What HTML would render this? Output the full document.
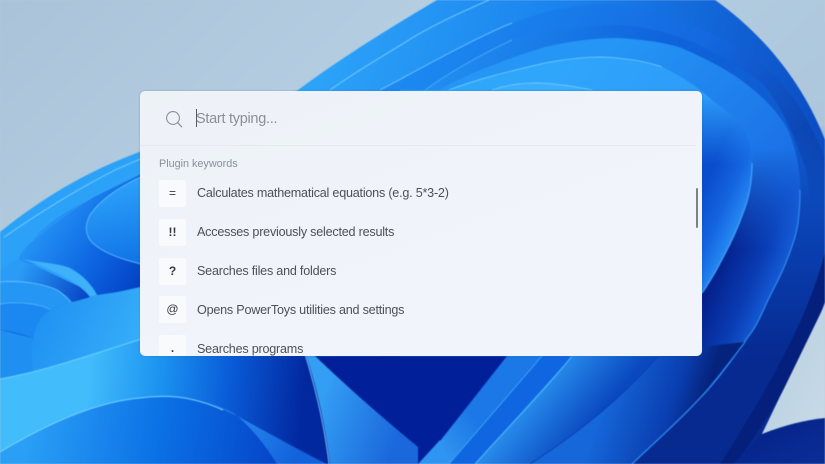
<!DOCTYPE html>
<html><head><meta charset="utf-8">
<style>
html,body{margin:0;padding:0;width:825px;height:464px;overflow:hidden;background:#b3cce0}
#bg{position:absolute;left:0;top:0;width:825px;height:464px;filter:blur(.5px)}
#panel{position:absolute;left:140px;top:91px;width:562px;height:265px;border-radius:5px;background:linear-gradient(160deg,#edf2f7,#f1f4fb 60%);overflow:hidden;box-shadow:0 0 2px rgba(60,80,110,.3);font-family:"Liberation Sans",sans-serif}
#sep{position:absolute;left:0;top:54px;width:556px;height:1px;background:#e6eaef}
#cur{position:absolute;left:56px;top:18px;width:1px;height:18px;background:#555b62}
.t{position:absolute;white-space:nowrap}
#ph{left:56px;top:19px;font-size:14.5px;line-height:18px;color:#8b9095;letter-spacing:-.28px}
#hd{left:19px;top:66px;font-size:10.8px;line-height:14px;color:#8a9096}
.k{position:absolute;left:19px;width:27px;height:27px;background:#f9fafc;border-radius:2px;text-align:center;font-size:12px;line-height:27px;color:#33383e}
.d{left:57px;font-size:12.6px;line-height:18px;color:#4c5157;letter-spacing:-.22px}
#sb{position:absolute;left:555.5px;top:97px;width:2px;height:40px;border-radius:1px;background:#7d8085}
</style></head><body>
<svg id="bg" viewBox="0 0 825 464" width="825" height="464" xmlns="http://www.w3.org/2000/svg">
<defs>
<linearGradient id="sky" x1="0" y1="0" x2="1" y2="0.6"><stop offset="0" stop-color="#aac3d8"/><stop offset=".45" stop-color="#b6cfe3"/><stop offset="1" stop-color="#a9c3d9"/></linearGradient>
<linearGradient id="skyb" x1="0" y1="0" x2="1" y2="1"><stop offset="0" stop-color="#b6cfe2"/><stop offset="1" stop-color="#c8dae6"/></linearGradient>
<linearGradient id="s0" gradientUnits="userSpaceOnUse" x1="300" y1="60" x2="825" y2="200"><stop offset="0" stop-color="#2ea6f9"/><stop offset=".45" stop-color="#1a82ee"/><stop offset="1" stop-color="#0a48c0"/></linearGradient>
<linearGradient id="s1" gradientUnits="userSpaceOnUse" x1="420" y1="40" x2="825" y2="300"><stop offset="0" stop-color="#1c8af2"/><stop offset=".5" stop-color="#1468e0"/><stop offset="1" stop-color="#062a90"/></linearGradient>
<linearGradient id="s2" gradientUnits="userSpaceOnUse" x1="430" y1="60" x2="810" y2="220"><stop offset="0" stop-color="#2290f2"/><stop offset=".5" stop-color="#0f64dc"/><stop offset="1" stop-color="#0f58cc"/></linearGradient>
<linearGradient id="s3" gradientUnits="userSpaceOnUse" x1="620" y1="40" x2="780" y2="200"><stop offset="0" stop-color="#2596f6"/><stop offset="1" stop-color="#1a6ce4"/></linearGradient>
<linearGradient id="s3b" gradientUnits="userSpaceOnUse" x1="715" y1="270" x2="785" y2="300"><stop offset="0" stop-color="#04208a"/><stop offset=".5" stop-color="#0a3cb4"/><stop offset="1" stop-color="#1a6ee8"/></linearGradient>
<linearGradient id="fade3" gradientUnits="userSpaceOnUse" x1="0" y1="150" x2="0" y2="250"><stop offset="0" stop-color="#000"/><stop offset="1" stop-color="#fff"/></linearGradient>
<mask id="m3" maskUnits="userSpaceOnUse" x="0" y="0" width="825" height="464"><rect width="825" height="464" fill="url(#fade3)"/></mask>
<linearGradient id="s4" gradientUnits="userSpaceOnUse" x1="560" y1="60" x2="750" y2="180"><stop offset="0" stop-color="#30a6fb"/><stop offset="1" stop-color="#2a96f8"/></linearGradient>
<linearGradient id="s4b" gradientUnits="userSpaceOnUse" x1="702" y1="190" x2="750" y2="212"><stop offset="0" stop-color="#0a4ccc"/><stop offset=".5" stop-color="#1464e0"/><stop offset="1" stop-color="#2a92f6"/></linearGradient>
<linearGradient id="fade4" gradientUnits="userSpaceOnUse" x1="0" y1="95" x2="0" y2="165"><stop offset="0" stop-color="#000"/><stop offset="1" stop-color="#fff"/></linearGradient>
<mask id="m4" maskUnits="userSpaceOnUse" x="0" y="0" width="825" height="464"><rect width="825" height="464" fill="url(#fade4)"/></mask>
<linearGradient id="fade5" gradientUnits="userSpaceOnUse" x1="0" y1="125" x2="0" y2="200"><stop offset="0" stop-color="#000"/><stop offset="1" stop-color="#fff"/></linearGradient>
<mask id="m5" maskUnits="userSpaceOnUse" x="0" y="0" width="825" height="464"><rect width="825" height="464" fill="url(#fade5)"/></mask>
<linearGradient id="out" gradientUnits="userSpaceOnUse" x1="0" y1="130" x2="0" y2="360"><stop offset="0" stop-color="#1258cc"/><stop offset=".5" stop-color="#0a3fb0"/><stop offset="1" stop-color="#062a90"/></linearGradient>
<linearGradient id="b1" gradientUnits="userSpaceOnUse" x1="420" y1="460" x2="475" y2="420"><stop offset="0" stop-color="#3ca2f6"/><stop offset="1" stop-color="#1b78e6"/></linearGradient>
<linearGradient id="b3" gradientUnits="userSpaceOnUse" x1="510" y1="400" x2="570" y2="450"><stop offset="0" stop-color="#2f9cf6"/><stop offset="1" stop-color="#0a48c0"/></linearGradient>
<linearGradient id="b4" gradientUnits="userSpaceOnUse" x1="600" y1="410" x2="690" y2="440"><stop offset="0" stop-color="#1668da"/><stop offset=".7" stop-color="#0a3eb0"/><stop offset="1" stop-color="#05237c"/></linearGradient>
<linearGradient id="br" x1="0" y1="0" x2="1" y2="1"><stop offset="0" stop-color="#041f88"/><stop offset="1" stop-color="#0a2f96"/></linearGradient>
<linearGradient id="leaf" gradientUnits="userSpaceOnUse" x1="40" y1="225" x2="135" y2="290"><stop offset="0" stop-color="#2592f4"/><stop offset=".5" stop-color="#0f6ae4"/><stop offset="1" stop-color="#0442c6"/></linearGradient>
<linearGradient id="lobe" gradientUnits="userSpaceOnUse" x1="110" y1="190" x2="130" y2="270"><stop offset="0" stop-color="#2a9ef8"/><stop offset="1" stop-color="#0f70e6"/></linearGradient>
<linearGradient id="und" gradientUnits="userSpaceOnUse" x1="20" y1="270" x2="90" y2="300"><stop offset="0" stop-color="#2a9cf6"/><stop offset="1" stop-color="#0540c4"/></linearGradient>
<linearGradient id="cy" gradientUnits="userSpaceOnUse" x1="40" y1="300" x2="145" y2="345"><stop offset="0" stop-color="#1f90f2"/><stop offset="1" stop-color="#38b0fa"/></linearGradient>
<linearGradient id="mid" gradientUnits="userSpaceOnUse" x1="90" y1="360" x2="305" y2="380"><stop offset="0" stop-color="#42bcfb"/><stop offset=".35" stop-color="#1a90f0"/><stop offset=".65" stop-color="#0a5cd8"/><stop offset="1" stop-color="#0228a0"/></linearGradient>
<linearGradient id="low" gradientUnits="userSpaceOnUse" x1="30" y1="420" x2="280" y2="460"><stop offset="0" stop-color="#2a9ff6"/><stop offset=".5" stop-color="#0c72e6"/><stop offset="1" stop-color="#0544c8"/></linearGradient>
<linearGradient id="wed" gradientUnits="userSpaceOnUse" x1="230" y1="415" x2="300" y2="450"><stop offset="0" stop-color="#2a8cf0"/><stop offset="1" stop-color="#1262dc"/></linearGradient>
<linearGradient id="band" gradientUnits="userSpaceOnUse" x1="320" y1="400" x2="400" y2="430"><stop offset="0" stop-color="#349ef4"/><stop offset="1" stop-color="#1b68dc"/></linearGradient>
</defs>
<rect width="825" height="464" fill="url(#sky)"/>

<!-- main silhouette top/right -->
<path d="M0,232 C50,192 95,168 145,150 L298,90 C345,55 395,25 437,0 L715,0 C755,28 800,75 825,140 L860,200 L825,302 L762,434 L735,464 L0,464 Z" fill="url(#s0)"/>
<path d="M330,90 C355,72 385,55 412,38 C435,24 462,12 489,0" fill="none" stroke="#7fd0fc" stroke-width=".9"/>

<!-- nested right layers -->
<path d="M380,90 C400,80 470,40 512,23 C540,12 575,4 605,4 C640,6 660,12 678,20 C705,30 730,42 745,50 C765,65 780,80 795,100 C815,130 825,160 840,190 L830,252 C815,300 800,335 779,365 C760,400 740,430 720,464 L380,464 Z" fill="url(#s1)"/>
<path d="M380,90 C400,80 470,40 512,23" fill="none" stroke="#7accfc" stroke-width=".8"/>
<path d="M425,90 C450,72 480,55 512,40 C550,30 590,25 619,25 C650,27 675,35 695,43 C720,55 745,70 762,83 C785,110 795,140 805,167 C812,195 810,225 800,255 L400,464 L400,90 Z" fill="url(#s2)"/>
<path d="M425,90 C450,72 480,55 512,40" fill="none" stroke="#5ab6fa" stroke-width=".7"/>
<!-- beyond D -->
<path d="M788,130 C796,150 801,170 800,190 C800,212 798,230 793,243 C787,262 781,275 773,290 C765,305 760,320 753,330 C735,355 718,380 699,399 C680,420 655,442 632,464 L735,464 L762,434 L825,302 L840,200 L830,120 Z" fill="url(#out)" mask="url(#m5)"/>
<!-- D region -->
<path d="M439,90 C470,72 510,58 545,47 C575,40 600,38 619,38 C645,40 662,42 679,47 C705,58 728,70 745,83 C765,98 780,115 788,130 C796,150 801,170 800,190 C800,212 798,230 793,243 C787,262 781,275 773,290 C765,305 760,320 753,330 C735,355 718,380 699,399 C680,420 655,442 632,464 L400,464 L400,90 Z" fill="url(#s3)"/>
<path d="M700,140 L800,140 L800,190 C800,212 798,230 793,243 C787,262 781,275 773,290 C765,305 760,320 753,330 C735,355 718,380 699,399 C680,420 655,442 632,464 L560,464 L658,356 L700,300 Z" fill="url(#s3b)" mask="url(#m3)"/>
<!-- E region -->
<path d="M449,90 C480,78 515,70 545,63 C565,59 585,57 602,57 C625,58 645,61 662,67 C680,75 698,87 712,100 C725,110 738,120 745,130 C750,142 753,152 752,163 C752,180 749,198 743,213 C737,230 730,245 720,263 C715,273 708,284 702,293 L658,356 L530,464 L400,464 L400,90 Z" fill="url(#s4)"/>
<path d="M690,95 L712,100 C725,110 738,120 745,130 C750,142 753,152 752,163 C752,180 749,198 743,213 C737,230 730,245 720,263 C715,273 708,284 702,293 L690,310 Z" fill="url(#s4b)" mask="url(#m4)"/>
<path d="M449,90 C480,78 515,70 545,63 C565,59 585,57 602,57 C625,58 645,61 662,67" fill="none" stroke="#72ccfd" stroke-width=".8"/>
<path d="M492,90 C510,84 525,83 539,83 C560,84 578,87 592,90 Z" fill="#3aaefc"/>
<path d="M492,90 C510,84 525,83 539,83 C560,84 578,87 592,90" fill="none" stroke="#7ad0fd" stroke-width=".7"/>
<path d="M752,163 C752,180 749,198 743,213 C737,230 730,245 720,263 C715,273 708,284 702,293" fill="none" stroke="#3a9cf8" stroke-width="1.4"/>
<path d="M632,464 C655,442 680,420 699,399 C718,380 735,355 753,330 C760,320 765,305 773,290 C781,275 787,262 793,243 C798,230 800,212 800,190" fill="none" stroke="#2f8cf0" stroke-width="1.2"/>
<path d="M825,252 C810,310 780,370 720,464 L735,464 C775,410 808,350 825,302 Z" fill="#05207c"/>
<!-- outer edge & sky lower right -->
<path d="M826,302 L762,434 L826,419 Z" fill="url(#skyb)"/>
<path d="M762,434 C785,425 805,420 825,418 L825,464 L733,464 Z" fill="url(#br)"/>

<!-- bottom center strips -->
<path d="M300,356 L512,356 L422,464 L300,464 Z" fill="#021f9a"/>
<path d="M507,356 L542,356 L449,464 L422,464 Z" fill="url(#b1)"/>
<path d="M542,356 L572,356 L475,464 L449,464 Z" fill="#0f66e0"/>
<path d="M572,356 L658,356 C625,395 580,432 530,464 L475,464 Z" fill="url(#b3)"/>
<path d="M655,352 L745,342 L699,399 L632,464 L530,464 C580,432 625,395 658,356 Z" fill="url(#b4)"/>
<path d="M449,464 L542,356" stroke="#3ea6fa" stroke-width=".9" fill="none"/>
<path d="M475,464 C510,425 545,390 572,356" stroke="#52bafc" stroke-width="1" fill="none"/>
<path d="M530,464 C580,432 625,395 658,356" stroke="#0a3cb0" stroke-width=".8" fill="none"/>
<path d="M632,464 C655,442 680,420 699,399 C718,380 735,355 745,342" fill="none" stroke="#2f8cf0" stroke-width="1.2"/>
<path d="M418,464 L440,440 L449,464 Z" fill="#2f94f2"/>

<!-- left top region -->
<path d="M0,232 C50,192 95,168 145,150 L145,300 L0,300 Z" fill="#2ba2f8"/>
<path d="M0,240 C40,212 80,188 115,170 L145,157" fill="none" stroke="#7dd0fc" stroke-width=".9"/>
<!-- under-leaf -->
<path d="M0,280 L0,258 L19,258 L97,295 L70,303 L0,290 Z" fill="url(#und)"/>
<path d="M0,232 L19,258 L0,270 Z" fill="#2ba2f8"/>
<path d="M19,258 C20,254 25,248 40,232 C70,205 110,190 145,172 L145,288 L97,295 C92,284 85,280 80,278 C70,272 55,267 40,265 C30,264 20,262 19,258 Z" fill="url(#leaf)"/>
<path d="M19,258 C30,262 55,262 70,268 C85,276 92,286 97,295 L90,297 C80,284 60,272 19,258 Z" fill="#3fb0fa"/>
<path d="M145,175 C120,186 100,200 90,215 C85,225 85,232 90,240 C100,252 120,259 145,265 Z" fill="url(#lobe)"/>
<path d="M145,175 C120,186 100,200 90,215 C85,225 85,232 90,240 C100,252 120,259 145,265" fill="none" stroke="#66c2fc" stroke-width=".8"/>
<path d="M30,243 C60,215 100,192 145,168" fill="none" stroke="#3aa4f8" stroke-width=".7"/>

<!-- left small lobes -->
<path d="M0,282 L0,379 L33,372 L32,345 L47,315 L72,302 L57,290 C45,284 20,280 0,282 Z" fill="#0f6ee6"/>
<path d="M0,282 C20,280 45,284 57,290 C63,294 68,298 71,302 L53,310 C40,304 20,302 0,304 Z" fill="#2596f4"/>
<path d="M0,304 C20,301 42,304 53,311 L46,316 C38,322 34,330 32,338 C22,333 10,331 0,330 Z" fill="#1a88f0"/>
<path d="M0,282 C20,280 45,284 57,290 C63,294 68,298 71,302" fill="none" stroke="#6cc6fc" stroke-width=".8"/>
<path d="M0,304 C20,301 42,304 53,311" fill="none" stroke="#5cbcfb" stroke-width=".7"/>
<path d="M0,330 L32,338 L32,350 L33,372 L0,379 Z" fill="#1f90f2"/>

<!-- big cyan blob -->
<path d="M33,372 C30,355 30,335 40,320 C47,310 57,306 67,303 L145,286 L145,338 C100,350 70,362 33,372 Z" fill="url(#cy)"/>
<path d="M33,372 C30,355 30,335 40,320 C47,310 57,306 67,303" fill="none" stroke="#2090f0" stroke-width=".6"/>
<path d="M0,379 C50,370 95,353 145,338 L145,352 L305,352 C318,390 325,430 330,464 L0,464 Z" fill="url(#mid)"/>
<path d="M0,379 C50,370 95,353 145,338" fill="none" stroke="#6cd0fc" stroke-width="1"/>
<path d="M0,452 C45,425 95,402 140,398 C155,396 165,396 177,397 C195,399 210,404 223,410 C240,418 258,429 273,440 C290,447 310,456 327,464 L0,464 Z" fill="url(#low)"/>
<path d="M0,452 C45,425 95,402 140,398 C155,396 165,396 177,397 C195,399 210,404 223,410" fill="none" stroke="#78d2fd" stroke-width="1"/>
<path d="M210,403 C240,416 290,446 327,464 L277,464 C265,445 250,425 233,413 C225,409 218,406 210,403 Z" fill="url(#wed)"/>

<!-- light band -->
<path d="M305,352 L311,352 C345,385 385,420 418,447 L418,464 L330,464 C325,425 318,390 305,352 Z" fill="url(#band)"/>
<path d="M305,354 C316,390 325,430 329,464" fill="none" stroke="#7fd0fb" stroke-width=".9"/>
</svg>

<div id="panel">
<svg style="position:absolute;left:24px;top:18px" width="20" height="20" viewBox="0 0 20 20"><circle cx="9" cy="9" r="6.4" fill="none" stroke="#8a9096" stroke-width="1.1"/><path d="M13.6,13.6 L18,18.2" fill="none" stroke="#8a9096" stroke-width="1.2"/></svg>
<div id="cur"></div>
<div class="t" id="ph">Start typing...</div>
<div id="sep"></div>
<div class="t" id="hd">Plugin keywords</div>
<div class="k" style="top:89px">=</div><div class="t d" style="top:93px">Calculates mathematical equations (e.g. 5*3-2)</div>
<div class="k" style="top:128px"><b>!!</b></div><div class="t d" style="top:132px">Accesses previously selected results</div>
<div class="k" style="top:167px"><b>?</b></div><div class="t d" style="top:171px">Searches files and folders</div>
<div class="k" style="top:205px">@</div><div class="t d" style="top:210px">Opens PowerToys utilities and settings</div>
<div class="k" style="top:244px"><b>.</b></div><div class="t d" style="top:249px">Searches programs</div>
<div id="sb"></div>
</div>
</body></html>
